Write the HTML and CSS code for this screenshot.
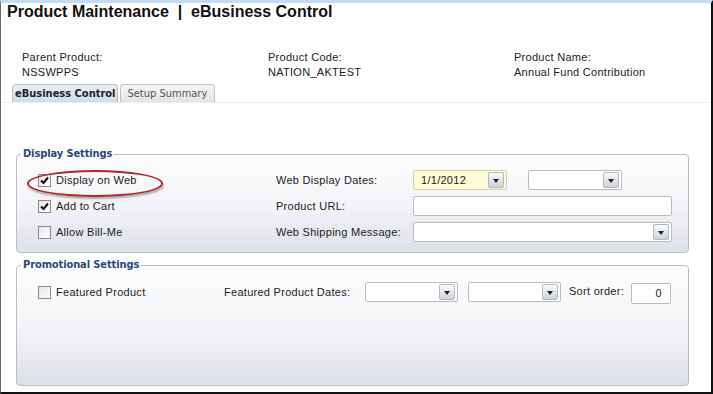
FILE: index.html
```html
<!DOCTYPE html>
<html lang="en">
<head>
  <meta charset="UTF-8">
  <meta name="viewport" content="width=device-width, initial-scale=1.0">
  <link rel="stylesheet" href="styles.css">
  <title>Product Maintenance</title>
</head>
<body>
  <div class="frame">
    <h1 class="title">Product Maintenance &nbsp;|&nbsp; eBusiness Control</h1>

    <div class="info">
      <div class="info-item">
        <div>Parent Product:</div>
        <div>NSSWPPS</div>
      </div>
      <div class="info-item">
        <div>Product Code:</div>
        <div>NATION_AKTEST</div>
      </div>
      <div class="info-item">
        <div>Product Name:</div>
        <div>Annual Fund Contribution</div>
      </div>
    </div>

    <div class="tabs">
      <span class="tab active">eBusiness Control</span>
      <span class="tab">Setup Summary</span>
    </div>

    <div class="panel">
      <fieldset class="group display">
        <legend>Display Settings</legend>
        <div class="display-grid">
          <div class="check-cell highlighted">
            <span class="checkbox checked"><svg viewBox="0 0 11 11"><path d="M2 5.5 L4.5 8 L9 2.5"/></svg></span>
            <span>Display on Web</span>
            <span class="ring"></span>
          </div>
          <div class="label">Web Display Dates:</div>
          <div class="dates">
            <div class="combo date filled"><span class="value">1/1/2012</span><span class="drop"></span></div>
            <div class="combo date"><span class="value"></span><span class="drop"></span></div>
          </div>

          <div class="check-cell">
            <span class="checkbox checked"><svg viewBox="0 0 11 11"><path d="M2 5.5 L4.5 8 L9 2.5"/></svg></span>
            <span>Add to Cart</span>
          </div>
          <div class="label">Product URL:</div>
          <div class="textbox wide"></div>

          <div class="check-cell">
            <span class="checkbox"></span>
            <span>Allow Bill-Me</span>
          </div>
          <div class="label">Web Shipping Message:</div>
          <div class="combo wide"><span class="value"></span><span class="drop"></span></div>
        </div>
      </fieldset>

      <fieldset class="group promo">
        <legend>Promotional Settings</legend>
        <div class="promo-row">
          <div class="check-cell featured">
            <span class="checkbox"></span>
            <span>Featured Product</span>
          </div>
          <div class="label featured-label">Featured Product Dates:</div>
          <div class="combo date small"><span class="value"></span><span class="drop"></span></div>
          <div class="combo date small"><span class="value"></span><span class="drop"></span></div>
          <div class="label sort-label">Sort order:</div>
          <div class="textbox sort">0</div>
        </div>
      </fieldset>
    </div>
  </div>
</body>
</html>
```

FILE: styles.css
```css
body {
  margin: 0;
  padding: 0;
  font-family: 'Liberation Sans', Arial, sans-serif;
  font-size: 11px;
  letter-spacing: 0.28px;
  color: #1c1c1c;
  background: #fff;
}
.frame {
  width: 713px;
  height: 394px;
  box-sizing: border-box;
  border-top: 3px solid #c4dbf4;
  border-right: 2px solid #111;
  border-bottom: 2px solid #111;
  border-left: 1px solid #6b6b6b;
  display: flex;
  flex-direction: column;
  background: #fff;
}
.title {
  margin: 0;
  padding-left: 6px;
  font-size: 16px;
  line-height: 18px;
  font-weight: bold;
  letter-spacing: 0;
  color: #111;
}
.info {
  display: grid;
  grid-template-columns: 246px 246px 1fr;
  margin-top: 29px;
  padding-left: 21px;
  line-height: 15px;
}
.tabs {
  display: flex;
  gap: 2px;
  margin-top: 4px;
  padding-left: 11px;
  font-family: 'DejaVu Sans Condensed', 'DejaVu Sans', sans-serif;
  font-size: 11px;
  letter-spacing: 0;
}
.tab {
  height: 17px;
  line-height: 17px;
  padding: 0 7px 0 6px;
  border: 1px solid #c3c3c3;
  border-bottom: none;
  border-radius: 4px 4px 0 0;
  background: linear-gradient(#f6f6f6, #e4e4e4);
  color: #555;
}
.tab.active {
  padding: 0 2px 0 2px;
  font-weight: bold;
  color: #222;
  background: linear-gradient(#e9eef4, #d3dbe5);
  border-color: #b8bec6;
}
.panel {
  flex: 1;
  border-top: 1px solid #ececec;
  padding: 44px 22px 6px 15px;
  display: flex;
  flex-direction: column;
}
.group {
  margin: 0;
  padding: 0;
  border: 1px solid #bdbdbd;
  border-radius: 4px;
  background: linear-gradient(#fdfdfd, #f2f3f6 55%, #dde0e8);
}
.group legend {
  margin-left: 4px;
  padding: 0 2px;
  font-family: 'DejaVu Sans Condensed', 'DejaVu Sans', sans-serif;
  font-size: 11px;
  line-height: 14px;
  font-weight: bold;
  letter-spacing: -0.1px;
  color: #28487e;
}
.display-grid {
  display: grid;
  grid-template-columns: 238px 137px 259px;
  grid-auto-rows: 20px;
  row-gap: 6px;
  align-items: center;
  padding: 9px 0 10px 21px;
}
.check-cell {
  display: flex;
  align-items: center;
  gap: 5px;
  position: relative;
}
.checkbox {
  width: 11px;
  height: 11px;
  border: 1px solid #8a8a8a;
  background: linear-gradient(135deg, #e6e6e6, #fff);
  display: inline-flex;
  align-items: center;
  justify-content: center;
}
.checkbox svg {
  width: 11px;
  height: 11px;
  fill: none;
  stroke: #111;
  stroke-width: 2;
}
.ring {
  position: absolute;
  left: -11px;
  top: -4px;
  width: 132px;
  height: 23px;
  border: 2px solid #b3262c;
  border-radius: 50%;
  box-shadow: 1px 2px 2px rgba(0, 0, 0, 0.3);
}
.dates {
  display: flex;
  gap: 21px;
}
.combo,
.textbox {
  height: 18px;
  border: 1px solid #b9bcc1;
  border-radius: 2px;
  background: #fff;
  display: flex;
  align-items: center;
  box-sizing: content-box;
}
.combo .value {
  flex: 1;
  padding-left: 7px;
}
.combo.date {
  width: 92px;
}
.combo.filled {
  background: #fffbd7;
  border-color: #d4cfae;
}
.combo.wide,
.textbox.wide {
  width: 257px;
}
.drop {
  width: 14px;
  height: 14px;
  margin-right: 2px;
  border: 1px solid #b4b7bd;
  border-radius: 2px;
  background: linear-gradient(#fbfbfb, #cfd2d7);
  position: relative;
}
.drop::after {
  content: '';
  position: absolute;
  left: 4px;
  top: 6px;
  border-left: 3px solid transparent;
  border-right: 3px solid transparent;
  border-top: 4px solid #17233a;
}
.promo {
  margin-top: 5px;
  flex: 1;
}
.promo-row {
  display: flex;
  align-items: center;
  padding: 10px 0 0 21px;
  height: 20px;
}
.check-cell.featured {
  width: 186px;
}
.featured-label {
  width: 141px;
}
.combo.small {
  width: 91px;
  margin-right: 10px;
}
.combo.small + .combo.small {
  margin-right: 8px;
}
.sort-label {
  width: 62px;
  margin-top: -2px;
}
.textbox.sort {
  width: 38px;
  height: 19px;
  justify-content: flex-end;
  margin-top: 2px;
}
.textbox.sort::after {
  content: '';
  width: 8px;
}
```
